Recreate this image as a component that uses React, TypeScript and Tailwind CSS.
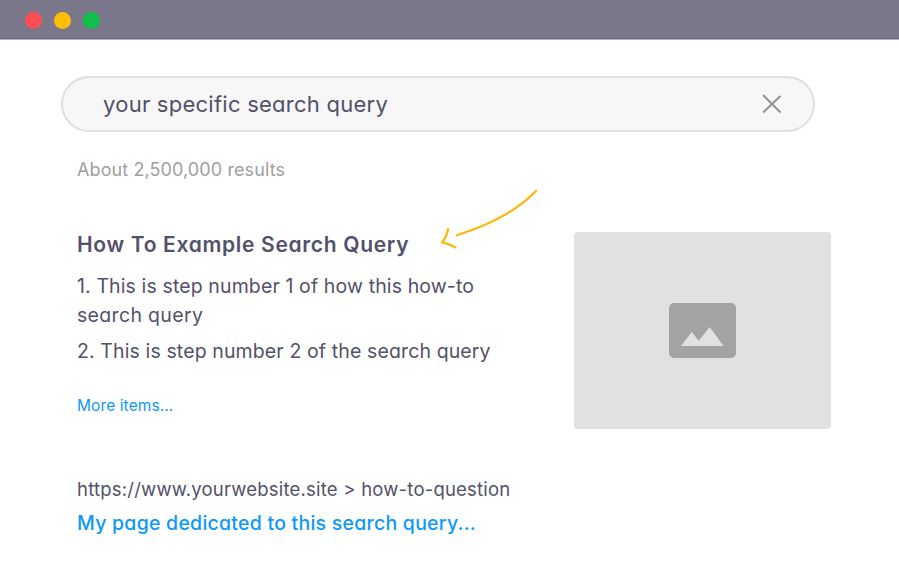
import { ReactNode } from "react";

const dots = ["bg-[#ff4d55]", "bg-[#ffbd06]", "bg-[#12c04c]"];

function WindowBar() {
  return (
    <header className="border-b border-[#b3b1bd]">
      <div className="flex h-[39px] items-center gap-3 border-b border-[#6d6780] bg-[#797789] pl-[25px]">
        {dots.map((dot) => (
          <span key={dot} className={`mt-[3px] size-[17px] rounded-full ${dot}`} />
        ))}
      </div>
    </header>
  );
}

function SearchBar({ children }: { children: ReactNode }) {
  return (
    <div className="ml-[61px] mt-9 flex h-14 w-[754px] items-center justify-between rounded-full border-2 border-[#dfdfdf] bg-[#f7f7f7] pl-10 pr-[31px]">
      <span className="text-[22px] tracking-[0.25px]">{children}</span>
      <svg width="20" height="20" viewBox="0 0 20 20" fill="none" stroke="#929292" strokeWidth="2">
        <path d="M1 1L18.500 18.500M18.500 2L1 18.500" />
      </svg>
    </div>
  );
}

function Arrow() {
  return (
    <svg
      className="absolute left-[353px] -top-[50px]"
      width="120"
      height="80"
      viewBox="0 0 120 80"
      fill="none"
      stroke="#ffb60a"
      strokeWidth="2.2"
    >
      <path d="M106.700 10.300C87 31 57 46 26 55.500" />
      <path d="M18.300 48.300Q17 56 12.300 62.300Q19 63.500 26 67.700" />
    </svg>
  );
}

function Thumbnail() {
  return (
    <div className="mt-0.5 flex h-[197px] w-[257px] items-center justify-center rounded bg-[#e1e1e1]">
      <svg width="67" height="55" viewBox="0 0 67 55">
        <rect width="67" height="55" rx="5" fill="#a3a3a3" />
        <path d="M12 43L22.700 29L29.700 37.700L40.700 24L54.500 43Z" fill="#e1e1e1" />
      </svg>
    </div>
  );
}

export default function App() {
  return (
    <div className="h-[588px] w-[899px] overflow-hidden bg-white font-['Inter',sans-serif] text-[#53516a] [font-feature-settings:'cv11']">
      <WindowBar />
      <SearchBar>your specific search query</SearchBar>

      <main className="pl-[77px] pt-[26px]">
        <p className="text-[18px] leading-6 tracking-[0.1px] text-[#a0a0a0]">
          <span>About 2,500,000 results</span>
        </p>

        <section className="mt-12 flex">
          <div className="relative w-[497px]">
            <Arrow />
            <h2 className="text-[21px] font-semibold leading-[30px] tracking-[0.68px]">
              <span>How To Example Search Query</span>
            </h2>
            <ol className="mt-3 space-y-[7px] text-[19.5px] leading-[29px] tracking-[0.12px]">
              <li>
                <span>1. This is step number 1 of how this how-to</span>
                <br />
                <span className="tracking-[0.33px]">search query</span>
              </li>
              <li>
                <span>2. This is step number 2 of the search query</span>
              </li>
            </ol>
            <a className="mt-7 block text-[15.5px] leading-6 tracking-[0.1px] text-[#0d99f8]">
              <span>More items...</span>
            </a>
          </div>
          <Thumbnail />
        </section>

        <section className="mt-11 leading-[33px]">
          <p className="text-[18.5px] tracking-[0.21px]">
            <span>https://www.yourwebsite.site &gt; how-to-question</span>
          </p>
          <a className="mt-px block text-[19.5px] font-medium tracking-[0.24px] text-[#0d99f8]">
            <span>My page dedicated to this search query...</span>
          </a>
        </section>
      </main>
    </div>
  );
}
